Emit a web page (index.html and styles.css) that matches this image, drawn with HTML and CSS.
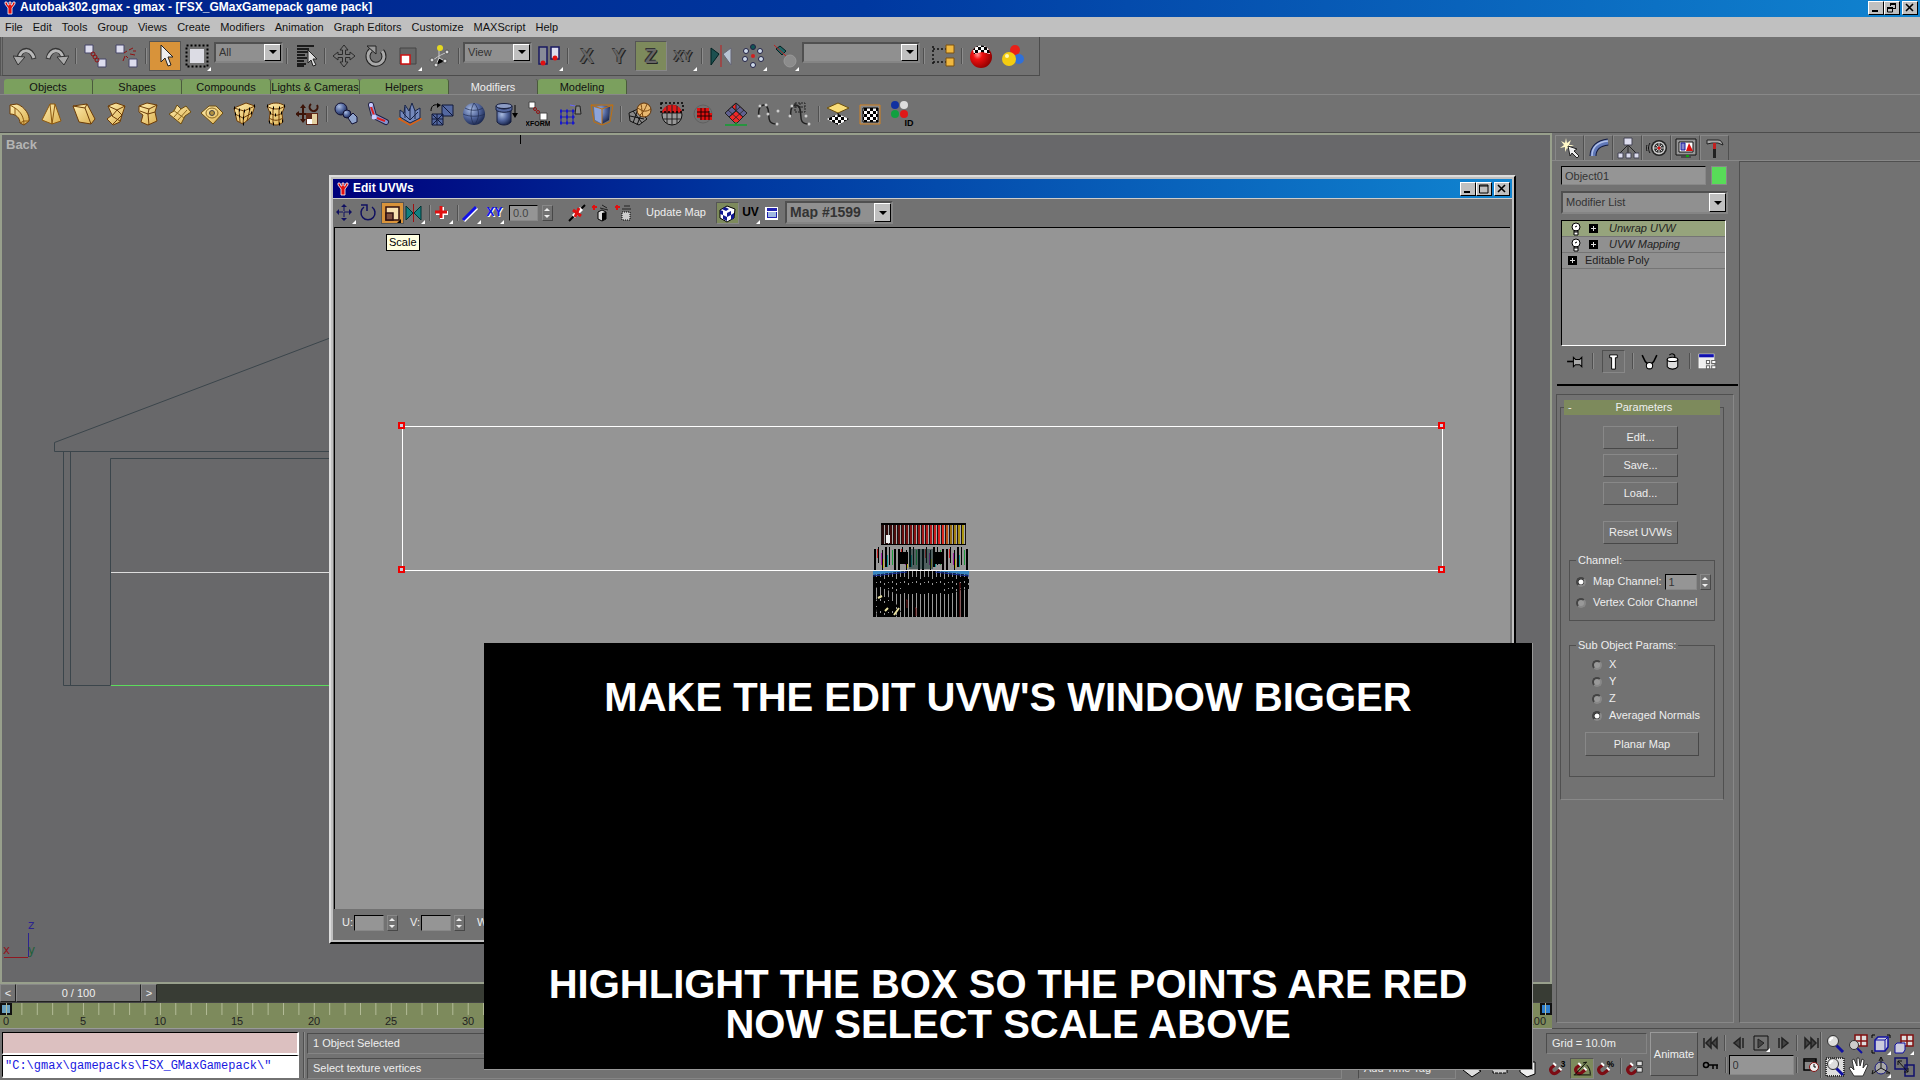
FILE: index.html
```html
<!DOCTYPE html>
<html lang="en">
<head>
    <meta charset="UTF-8">
    <meta name="viewport" content="width=device-width, initial-scale=1.0">
    <title>Autobak302.gmax - gmax</title>
    <link rel="stylesheet" href="styles.css">
</head>
<body>
    <!-- shared icons -->
    <svg class="defs" aria-hidden="true">
        <symbol id="logo" viewBox="0 0 12 14">
            <path d="M1 1h2l1 3h1V1h2v3h1l1-3h2v2L8 7v6H4V7L1 3z" fill="#e01010" stroke="#fff" stroke-width=".8"/>
        </symbol>
        <symbol id="magnet" viewBox="0 0 24 20">
            <path d="M10 6l-4 3a4 4 0 0 0 5 6l5-4" fill="none" stroke="#7c0c14" stroke-width="3.500"/>
            <path d="M8 4l3 3M14 9l3 3" stroke="#fff" stroke-width="2"/>
        </symbol>
        <symbol id="bulb" viewBox="0 0 10 14">
            <circle cx="5" cy="5" r="4" fill="#fff" stroke="#000"/>
            <path d="M3 9h4v4H3z" fill="#fff" stroke="#000"/><path d="M4 5l2-1M3 10h4" stroke="#000"/>
        </symbol>
        <symbol id="plus" viewBox="0 0 9 9">
            <path d="M0 0h9v9H0z"/><path d="M2 4.500h5M4.500 2v5" stroke="#ddd"/>
        </symbol>
        <symbol id="lens" viewBox="0 0 22 22">
            <path d="M12 12l7 7" stroke="#1010a0" stroke-width="3"/><circle cx="9" cy="8" r="5.500" fill="#ddd" stroke="#333"/><path d="M6 8a3 3 0 0 1 3-3" stroke="#fff" stroke-width="2" fill="none"/>
        </symbol>
        <pattern id="checks" width="6" height="6" patternUnits="userSpaceOnUse">
            <path d="M0 0h6v6H0z" fill="#fff"/><path d="M0 0h3v3H0zM3 3h3v3H3z"/>
        </pattern>
        <radialGradient id="steel" cx=".35" cy=".3" r=".8"><stop offset="0" stop-color="#a9bce0"/><stop offset=".5" stop-color="#51659c"/><stop offset="1" stop-color="#101c40"/></radialGradient>
        <radialGradient id="redball" cx=".35" cy=".4" r=".7"><stop offset="0" stop-color="#ff9090"/><stop offset=".3" stop-color="#f01010"/><stop offset="1" stop-color="#800"/></radialGradient>
        <linearGradient id="gold" x2="1" y2="1"><stop offset="0" stop-color="#ffeeb0"/><stop offset="1" stop-color="#dcb050"/></linearGradient>
    </svg>

    <header class="titlebar">
        <svg class="logo"><use href="#logo"/></svg>
        <span class="caption">Autobak302.gmax - gmax - [FSX_GMaxGamepack game pack]</span>
        <div class="winbtns">
            <button aria-label="Minimize"><svg viewBox="0 0 12 10"><path d="M2 7h6v2H2z"/></svg></button>
            <button aria-label="Restore"><svg viewBox="0 0 12 10" fill="none" stroke="#000"><path d="M4.500 1v2M4 1.500h6M9.500 1v5M7 5.500h3M1 4.500h6M1.500 4v5h5v-5M1 5.500h6M4 .5h6"/></svg></button>
            <button class="close" aria-label="Close"><svg viewBox="0 0 12 10"><path d="M2 1l7 7M9 1l-7 7" stroke="#000" stroke-width="1.600"/></svg></button>
        </div>
    </header>

    <nav class="menubar">
        <a href="#">File</a><a href="#">Edit</a><a href="#">Tools</a><a href="#">Group</a><a href="#">Views</a><a href="#">Create</a><a href="#">Modifiers</a><a href="#">Animation</a><a href="#">Graph Editors</a><a href="#">Customize</a><a href="#">MAXScript</a><a href="#">Help</a>
    </nav>

    <div class="toolbar">
        <button class="tool" aria-label="Undo"><svg viewBox="0 0 24 24"><path d="M6 14C8 4 18 3 21 15" fill="none" stroke="#333" stroke-width="5"/><path d="M6 14C8 5 17 4 21 14" fill="none" stroke="#b8b8b8" stroke-width="3"/><path d="M0 12l12 1-7 8z" fill="#aaa" stroke="#333"/></svg></button>
        <button class="tool" aria-label="Redo"><svg viewBox="0 0 24 24"><path d="M18 14C16 4 6 3 3 15" fill="none" stroke="#333" stroke-width="5"/><path d="M18 14C16 5 7 4 3 14" fill="none" stroke="#b8b8b8" stroke-width="3"/><path d="M24 12l-12 1 7 8z" fill="#aaa" stroke="#333"/></svg></button>
        <span class="sep"></span>
        <button class="tool" aria-label="Link"><svg viewBox="0 0 24 24"><path d="M2 1h8v8H2zM15 15h8v8h-8z" fill="#dde" stroke="#446"/><g fill="none" stroke="#901010"><circle cx="10" cy="10" r="2"/><circle cx="12" cy="13" r="2"/><circle cx="14" cy="16" r="2"/></g></svg></button>
        <button class="tool" aria-label="Unlink"><svg viewBox="0 0 24 24"><path d="M1 1h8v8H1zM14 15h8v8h-8z" fill="#dde" stroke="#446"/><path d="M9 9l3-2M13 14l-2-2M14 6l4-2M18 7h3M15 10l5 1M10 12l-2 5" stroke="#901010"/></svg></button>
        <span class="sep"></span>
        <button class="tool hot" aria-label="Select"><svg viewBox="0 0 24 24"><path d="M8 1v17l4-4 3 8 3-1-3-8h5z" fill="#eee" stroke="#222"/></svg></button>
        <button class="tool fly" aria-label="Region"><svg viewBox="0 0 24 24"><path d="M1.500 1.500h21v21h-21z" fill="none" stroke="#000" stroke-width="2" stroke-dasharray="2 2"/><path d="M5 5h14v14H5z" fill="#dcdce4"/></svg></button>
        <span class="combo w69"><select aria-label="Selection filter"><option>All</option></select></span>
        <span class="sep"></span>
        <button class="tool" aria-label="Select by name"><svg viewBox="0 0 24 24"><path d="M3 2h17M3 5h12M3 8h12M3 11h8M3 14h10M3 17h7M3 20h9M3 22h7" stroke="#000" stroke-width="1.500"/><path d="M14 6v13l3-3 2 6 3-1-3-6h4z" fill="#ddd" stroke="#222"/></svg></button>
        <span class="sep"></span>
        <button class="tool" aria-label="Move"><svg viewBox="0 0 24 24"><path d="M12 1l4 5h-2.500v4.500H18V8l5 4-5 4v-2.500h-4.500V18H16l-4 5-4-5h2.500v-4.500H6V16l-5-4 5-4v2.500h4.500V6H8z" fill="#777" stroke="#2a2a2a"/></svg></button>
        <button class="tool" aria-label="Rotate"><svg viewBox="0 0 24 24"><path d="M7 6a8 8 0 1 0 11 1" fill="none" stroke="#222" stroke-width="5"/><path d="M7 6a8 8 0 1 0 11 1" fill="none" stroke="#aaa" stroke-width="3"/><path d="M3 2h9v8z" fill="#999" stroke="#222"/></svg></button>
        <button class="tool fly" aria-label="Scale"><svg viewBox="0 0 24 24"><path d="M4 4h16v16H4z" fill="#666" stroke="#444"/><path d="M5 11h9v9H5z" fill="#fff" stroke="#d01010" stroke-width="1.500"/></svg></button>
        <button class="tool" aria-label="Manipulate"><svg viewBox="0 0 24 24"><path d="M11 5l0 10M5 16l6-4 8-4M8 21l3-7 6 3" stroke="#ccc"/><circle cx="12" cy="4" r="3" fill="#e4d820"/><g fill="#ddd" stroke="#555"><circle cx="19" cy="8" r="2"/><circle cx="4" cy="16" r="2"/><circle cx="8" cy="21" r="2"/><circle cx="17" cy="17" r="2"/></g></svg></button>
        <span class="sep"></span>
        <span class="combo w69"><select aria-label="Coordinate system"><option>View</option></select></span>
        <button class="tool fly" aria-label="Pivot"><svg viewBox="0 0 24 24"><path d="M2 3h8v17H2z" fill="#888c98" stroke="#1a1a60" stroke-width="1.500"/><path d="M14 3h8v12h-8z" fill="#dde" stroke="#1a1a60" stroke-width="1.500"/><circle cx="6" cy="19" r="2.500" fill="#e01010"/><circle cx="18" cy="14" r="2.500" fill="#e01010"/></svg></button>
        <span class="sep"></span>
        <button class="tool axis">X</button>
        <button class="tool axis">Y</button>
        <button class="tool axis on">Z</button>
        <button class="tool axis small fly">XY</button>
        <span class="sep"></span>
        <button class="tool" aria-label="Mirror"><svg viewBox="0 0 24 24"><path d="M2 4l8 6-8 11z" fill="#1c5050" stroke="#022"/><path d="M22 4l-8 6 8 11z" fill="#b8c4d4" stroke="#667"/><path d="M12 1v22" stroke="#c02020"/></svg></button>
        <button class="tool fly" aria-label="Array"><svg viewBox="0 0 24 24"><g fill="#ccd8e8" stroke="#224"><circle cx="12" cy="3" r="2.500" fill="#155"/><circle cx="19" cy="7" r="2.500"/><circle cx="20" cy="15" r="2.500"/><circle cx="12" cy="21" r="2.500"/><circle cx="4" cy="15" r="2.500"/><circle cx="5" cy="7" r="2.500"/></g><circle cx="12" cy="12" r="2" fill="#d02020"/></svg></button>
        <button class="tool fly" aria-label="Align"><svg viewBox="0 0 24 24"><path d="M3 5l4-3 6 5-4 4z" fill="#266" stroke="#022"/><path d="M1 1l12 11" stroke="#c02020"/><circle cx="17" cy="17" r="6" fill="#8c8c8c" stroke="#999"/></svg></button>
        <span class="combo w118"><select aria-label="Named selections"><option></option></select></span>
        <span class="sep"></span>
        <button class="tool" aria-label="Track view"><svg viewBox="0 0 24 24"><path d="M2 2v18M2 5h13M2 18h13" stroke="#111" stroke-width="1.500" stroke-dasharray="2 2"/><path d="M15 1h8v8h-8zM15 14h8v8h-8z" fill="#f0b840" stroke="#7a5010"/></svg></button>
        <span class="sep"></span>
        <button class="tool" aria-label="Material editor"><svg viewBox="0 0 24 24"><circle cx="12" cy="13" r="11" fill="url(#redball)"/><path d="M4 6c3-6 13-6 16 0l1 4-8-2-8 2z" fill="url(#checks)"/></svg></button>
        <button class="tool" aria-label="Material navigator"><svg viewBox="0 0 24 24"><circle cx="14" cy="6" r="5" fill="#e82018"/><circle cx="18" cy="15" r="5" fill="#3070d8"/><circle cx="8" cy="15" r="7" fill="#f4cc10"/><circle cx="6" cy="12" r="2" fill="#fff8b0"/></svg></button>
    </div>

    <div class="shelf">
        <div class="shelf-tabs">
            <button>Objects</button><button>Shapes</button><button>Compounds</button><button>Lights &amp; Cameras</button><button>Helpers</button><button class="current">Modifiers</button><button>Modeling</button>
        </div>
        <div class="shelf-icons">
            <button class="tool" aria-label="Bend"><svg viewBox="0 0 24 24"><path d="M2 3l7-1c8 3 13 11 12 17l-5 4-4-2C12 16 8 12 2 12z" fill="url(#gold)" stroke="#6c3c08"/><path d="M2 3l5 3c6 4 9 9 9 17M7 6v7M12 21l4-2 5 0" fill="none" stroke="#8c5810"/></svg></button>
            <button class="tool" aria-label="Taper"><svg viewBox="0 0 24 24"><path d="M10 2h5l6 17-9 3-10-4z" fill="url(#gold)" stroke="#8c5810"/><path d="M10 2l2 20 3-20" fill="none" stroke="#8c5810"/></svg></button>
            <button class="tool" aria-label="Skew"><svg viewBox="0 0 24 24"><path d="M1 4l14-2 8 15-4 5-12-2z" fill="url(#gold)" stroke="#6c3c08"/><path d="M1 4l12 2 6 16M13 6l2-4" fill="none" stroke="#6c3c08"/></svg></button>
            <button class="tool" aria-label="Twist"><svg viewBox="0 0 24 24"><path d="M4 4l8-3 9 3-3 9-2 7-7 3-6-6 5-4z" fill="url(#gold)" stroke="#6c3c08"/><path d="M4 4l9 4 8-4M13 8l-5 6 8 5M13 8l5 5-9 9" fill="none" stroke="#6c3c08"/></svg></button>
            <button class="tool" aria-label="Noise"><svg viewBox="0 0 24 24"><path d="M3 4l8-3 10 2-2 7 2 9-9 4-7-3 2-7-4-3z" fill="url(#gold)" stroke="#6c3c08"/><path d="M3 4l10 3 8-4M13 7l-1 5 1 11M4 9l8 3 7-2" fill="none" stroke="#6c3c08"/></svg></button>
            <button class="tool" aria-label="Wave"><svg viewBox="0 0 24 24"><path d="M9 3l4 4 5-3 5 6-6 4-4 8-6-5-6-5 5-3z" fill="url(#gold)" stroke="#6c4c10"/><path d="M5 8l11 8M13 7l-7 8M19 8l-9 10" stroke="#8c6820" fill="none"/></svg></button>
            <button class="tool" aria-label="Ripple"><svg viewBox="0 0 24 24"><path d="M1 11l8-7h7l7 7-10 11z" fill="url(#gold)" stroke="#6c4c10"/><ellipse cx="12" cy="11" rx="6" ry="5" fill="none" stroke="#8c6820"/><circle cx="12" cy="11" r="2.500" fill="#b09040" stroke="#444"/></svg></button>
            <button class="tool" aria-label="FFD box"><svg viewBox="0 0 24 24"><path d="M2 6l12-5 9 3-4 11-8 7-6-3z" fill="url(#gold)" stroke="#6c3c08"/><path d="M2 6l10 3 11-5M3 12l8 4 9-5M12 9l-1 13M7 8l1 12M18 7l-3 12" fill="none" stroke="#6c3c08"/><path d="M2 6h1M12 9h1M22 4h1M3 12h1M11 16h1M19 11h1M7 8h1M11 22h1M7 14h1M17 7h1" stroke="#000" stroke-width="3"/></svg></button>
            <button class="tool" aria-label="FFD cylinder"><svg viewBox="0 0 24 24"><path d="M3 4c5-4 13-4 18 0l-3 7 1 9c-4 4-10 4-14 0l1-9z" fill="url(#gold)" stroke="#6c3c08"/><path d="M3 4c5 4 13 4 18 0M6 11c4 3 8 3 12 0M5 16c5 3 9 3 14 0M9 6v16M15 6v16" fill="none" stroke="#6c3c08"/><path d="M3 4h1M9 6h1M15 6h1M20 4h1M6 11h1M11 13h1M17 11h1M5 20h1M9 22h1M15 22h1M18 19h1" stroke="#000" stroke-width="3"/></svg></button>
            <button class="tool" aria-label="XForm gizmo"><svg viewBox="0 0 24 24"><path d="M7 5v13M1 12h13" stroke="#3c1408" stroke-width="2"/><path d="M7 2l-3 4h6zM7 21l-3-4h6zM-1 12l4-3v6z" fill="#3c1408"/><path d="M15 2a4 4 0 1 0 6 1" fill="none" stroke="#3c1408" stroke-width="2"/><path d="M10 11h12v12H10z" fill="#5c2818"/><path d="M11 17h5v5h-5z" fill="#fff"/><path d="M16 12h5v10h-5z" fill="#e4d0a0"/></svg></button>
            <span class="sep"></span>
            <button class="tool" aria-label="Skin"><svg viewBox="0 0 24 24"><circle cx="7" cy="7" r="6" fill="url(#steel)" stroke="#113"/><circle cx="13" cy="12" r="4" fill="url(#steel)" stroke="#113"/><path d="M14 16l5-5 4 4v5l-5 2z" fill="#90a4cc" stroke="#113"/></svg></button>
            <button class="tool" aria-label="Flex"><svg viewBox="0 0 24 24"><path d="M5 3l3 11 12 6" stroke="#224" stroke-width="6" stroke-linecap="round" fill="none"/><path d="M5 3l3 11 12 6" stroke="#8894d0" stroke-width="4" stroke-linecap="round" fill="none"/><path d="M5 5l3 8M11 16l8 3" stroke="#e02020" stroke-width="2"/><circle cx="5" cy="3" r="2" fill="#ccf"/><circle cx="8" cy="15" r="2.500" fill="#ccf"/></svg></button>
            <button class="tool" aria-label="Displace"><svg viewBox="0 0 24 24"><path d="M1 17l11-5 11 5-11 6z" fill="none" stroke="#e06010" stroke-width="1.500"/><path d="M2 15V8l4 3 1-8 4 6 3-8 3 8 5-3v10l-10 5z" fill="#7488bc" stroke="#182448"/><path d="M7 5v11M12 6v12M17 9v8M5 11l7 7 8-8" stroke="#182448" fill="none"/></svg></button>
            <button class="tool" aria-label="Affect region"><svg viewBox="0 0 24 24"><path d="M12 3h11v11H12zM2 12h11v11H2z" fill="#5468a0" stroke="#101838"/><path d="M12 3l11 11M2 12l11 11M13 12L2 23M7 12v11M2 17h11" stroke="#101838"/><path d="M1 9c0-5 3-7 7-6" stroke="#000" fill="none"/><path d="M7 1l4 2-4 3z"/></svg></button>
            <button class="tool" aria-label="Spherify"><svg viewBox="0 0 24 24"><circle cx="12" cy="12" r="11" fill="url(#steel)"/><path d="M1 12c6 3 16 3 22 0M12 1c-4 7-4 15 0 22M12 1c6 6 6 16 0 22M3 6c5 3 13 3 18 0" fill="none" stroke="#202c50" stroke-width=".7"/></svg></button>
            <button class="tool" aria-label="Squeeze"><svg viewBox="0 0 24 24"><path d="M3 8h14v12c-3 4-11 4-14 0z" fill="url(#steel)" stroke="#182040"/><path d="M2 4c3 4 13 4 16 0v4c-4 3-12 3-16 0z" fill="#5468a0" stroke="#182040"/><ellipse cx="10" cy="4" rx="8" ry="2.500" fill="#8c9cc4" stroke="#182040"/><path d="M21 3v10" stroke="#000"/><path d="M18 11h6l-3 5z"/></svg></button>
            <button class="tool" aria-label="XForm"><svg class="tall" viewBox="0 0 24 26"><path d="M3 1h6v6H3zM14 12h7v7h-7z" fill="#fff" stroke="#444"/><g fill="none" stroke="#901010"><circle cx="9" cy="8" r="1.500"/><circle cx="12" cy="11" r="1.500"/></g><text x="12" y="25" class="icon-text">XFORM</text></svg></button>
            <button class="tool" aria-label="FFD select"><svg viewBox="0 0 24 24"><path d="M2 9h15M2 15h15M2 21h15M3 9v13M9 9v13M15 9v13" stroke="#2020a0"/><path d="M2 9h2M8 9h2M14 9h2M2 15h2M8 15h2M14 15h2M2 21h2M8 21h2M14 21h2" stroke="#1818d0" stroke-width="3"/><path d="M18 4h4l1 8h-6z" fill="#888" stroke="#222"/><path d="M12 3l5 1" stroke="#66f"/></svg></button>
            <button class="tool" aria-label="Lattice"><svg viewBox="0 0 24 24"><path d="M4 5l8-2 8 2-1 13-7 4-7-4z" fill="url(#steel)"/><path d="M4 5l8 3v14l-7-4z" fill="#8ca4dc"/><path d="M1 3h22l-3 17-8 3-8-3zM1 3l11 4 11-4M12 7v16" fill="none" stroke="#c07010"/></svg></button>
            <span class="sep"></span>
            <button class="tool" aria-label="Mesh select"><svg viewBox="0 0 24 24"><path d="M1 11l9-4 9 10-8 6-9-4z" fill="#888" stroke="#111"/><path d="M2 14l14 3M5 9l9 12M10 7l-5 14M14 10L9 23" stroke="#111"/><circle cx="16" cy="8" r="7" fill="#e8b870" stroke="#5c3008"/><path d="M10 6c5 4 8 4 13 1M13 2c1 5 1 9 2 13M19 2c-2 5-3 8-7 11" fill="none" stroke="#7c4810"/></svg></button>
            <button class="tool" aria-label="Volume select"><svg viewBox="0 0 24 24"><circle cx="12" cy="13" r="10" fill="#999" stroke="#111"/><path d="M2 11C3 0 21 0 22 11z" fill="#e01818"/><path d="M2 11h20M3 17h18M7 4v17M12 3v20M17 4v17" stroke="#222"/><path d="M1 1h22v9H1z" fill="none" stroke="#000" stroke-width="1.500" stroke-dasharray="2 2"/></svg></button>
            <button class="tool" aria-label="Poly select"><svg viewBox="0 0 24 24"><circle cx="11" cy="12" r="9" fill="none" stroke="#606060"/><path d="M5 6h12v5h3v7H8v-2H5z" fill="#e01010"/><path d="M5 10h12M5 14h15M9 6v12M13 6v12M17 9v9" stroke="#200"/></svg></button>
            <button class="tool" aria-label="Patch select"><svg viewBox="0 0 24 24"><path d="M12 1l11 10-11 11L1 11z" fill="#f02828" stroke="#222"/><path d="M12 1l11 10-4 4-11-10zM12 1L1 11l4 4 7-6z" fill="#606090" stroke="#222"/><path d="M8 5l11 10M4 8l11 10M16 5L5 15M20 8L9 18" stroke="#222" stroke-width=".8"/><path d="M1 23h22M12 20v3" stroke="#10a030" stroke-width="1.500"/></svg></button>
            <button class="tool" aria-label="Spline select"><svg viewBox="0 0 24 24"><path d="M3 15C1 2 10 0 12 7s-2 15 9 15" fill="none" stroke="#222" stroke-width="1.500"/><g fill="#ccc"><circle cx="3" cy="14" r="1.500"/><circle cx="4" cy="4" r="1.500"/><circle cx="10" cy="3" r="1.500"/><circle cx="12" cy="12" r="1.500"/><circle cx="21" cy="22" r="1.500"/><circle cx="22" cy="9" r="1.500"/></g></svg></button>
            <button class="tool" aria-label="Spline edit"><svg viewBox="0 0 24 24"><path d="M3 15C1 2 10 0 12 7s-2 15 9 15" fill="none" stroke="#222" stroke-width="1.500"/><path d="M7 1h10v9H7zM12 1v9M7 5h10" fill="none" stroke="#222" stroke-dasharray="2 1"/><g fill="#ccc"><circle cx="2" cy="14" r="1.500"/><circle cx="4" cy="4" r="1.500"/><circle cx="18" cy="14" r="1.500"/><circle cx="21" cy="22" r="1.500"/></g></svg></button>
            <span class="sep"></span>
            <button class="tool" aria-label="UVW map"><svg viewBox="0 0 24 24"><path d="M12 12l11 5-11 6-11-6z" fill="url(#checks)"/><path d="M12 1l11 5-11 5L1 6z" fill="#f8dc78" stroke="#6c5010"/><path d="M12 11v4" stroke="#000"/></svg></button>
            <button class="tool" aria-label="Unwrap UVW"><svg viewBox="0 0 24 24"><path d="M2 3h20v19H2z" fill="#888" stroke="#d08020"/><path d="M5 6h15v14H5z" fill="url(#checks)" stroke="#000"/></svg></button>
            <button class="tool" aria-label="Material ID"><svg class="tall" viewBox="0 0 24 26"><circle cx="5" cy="4" r="4" fill="#1030a0"/><circle cx="14" cy="4" r="4" fill="#ddd"/><circle cx="5" cy="13" r="4" fill="#10a040"/><circle cx="14" cy="13" r="4" fill="#e01818"/><text x="19" y="25" class="icon-text id">ID</text></svg></button>
        </div>
    </div>

    <main class="main">
        <div class="left">
            <section class="viewport">
                <span class="view-name">Back</span>
                <svg class="scene">
                    <g fill="none" stroke="#3b454b">
                        <path d="M328 203L52.500 307.500V316.500H328M61.500 317V550.500H108.500M68.500 317V550M108.500 550V323.500H328"/>
                    </g>
                    <path d="M109 437.500H328" stroke="#ddd"/><path d="M109 550.500H328" stroke="#5cdc5c"/>
                    <path d="M518.500 0v9" stroke="#000"/>
                </svg>
                <svg class="tripod" viewBox="0 0 40 45">
                    <path d="M26.500 14V38" stroke="#2c2490"/><path d="M2 38.500H26" stroke="#901820"/>
                    <text x="26" y="10" fill="#2c2490">z</text><text x="1" y="35" fill="#901820">x</text><text x="26" y="35" fill="#206038">y</text>
                </svg>
            </section>
            <div class="slider">
                <button class="step">&lt;</button><button class="thumb">0 / 100</button><button class="step">&gt;</button>
            </div>
            <div class="track">
                <i class="marker start"></i><i class="marker end"></i>
                <div class="ticks">
                    <span class="first">0</span><span>5</span><span class="two">10</span><span class="two">15</span><span class="two">20</span><span class="two">25</span><span class="two">30</span><span class="last">100</span>
                </div>
            </div>
        </div>

        <aside class="side">
            <div class="side-tabs">
                <button aria-label="Create"><svg viewBox="0 0 22 22"><path d="M7 1l1 5 4-3-2 5 5 0-5 2 2 4-4-3-2 4 0-5-5 1 4-3-3-4 4 2z" fill="#fff8c8"/><path d="M9 9l2 10 2-3 5 5 2-2-5-5 3-2z" fill="#eee" stroke="#222"/></svg></button>
                <button class="current" aria-label="Modify"><svg viewBox="0 0 22 22"><path d="M5 19C5 11 11 6 20 5" fill="none" stroke="#141c40" stroke-width="7"/><path d="M5 19C5 11 11 6 20 5" fill="none" stroke="#6078b8" stroke-width="5"/><path d="M4 19C4 10 10 5 20 4" fill="none" stroke="#b0c0e8" stroke-width="1.500"/></svg></button>
                <button aria-label="Hierarchy"><svg viewBox="0 0 22 22"><path d="M11 8L3 16M11 8v8M11 8l8 8" stroke="#222"/><path d="M7 1h8v7H7zM1 16h5v5H1zM9 16h5v5H9zM17 16h5v5h-5z" fill="#dde" stroke="#445"/></svg></button>
                <button aria-label="Motion"><svg viewBox="0 0 22 22"><circle cx="13" cy="11" r="8" fill="#222"/><circle cx="13" cy="11" r="6.500" fill="#ccc"/><circle cx="13" cy="11" r="5" fill="#333"/><path d="M13 6v10M8 11h10M10 8l6 6M16 8l-6 6" stroke="#ccc"/><circle cx="13" cy="11" r="1.500" fill="#e01010"/><path d="M4 6c-2 3-2 7 0 10M1 8c-1 2-1 4 0 6" fill="none" stroke="#111"/></svg></button>
                <button aria-label="Display"><svg viewBox="0 0 22 22"><path d="M1 2h20v16H1z" fill="#999" stroke="#111"/><path d="M4 5h14v10H4z" fill="#fff" stroke="#111"/><path d="M6 6h4v7H6z" fill="#88c" stroke="#1818a0"/><path d="M11 14l3-8 4 8z" fill="#e01010"/><path d="M6 20h10" stroke="#222"/><path d="M11 19h3" stroke="#10a010" stroke-width="2"/></svg></button>
                <button aria-label="Utilities"><svg viewBox="0 0 22 22"><path d="M3 3h11c3 0 4 2 5 5l-5-2H8L3 7z" fill="#aaa" stroke="#222"/><path d="M9 6h3v7H9z" fill="#c02020"/><path d="M9 12h3v9H9z" fill="#222"/></svg></button>
            </div>
            <div class="side-body">
                <div class="panel">
                    <div class="name-row">
                        <input class="well" aria-label="Object name" value="Object01">
                        <button class="swatch" aria-label="Object colour"></button>
                    </div>
                    <span class="combo big"><select aria-label="Modifier list"><option>Modifier List</option></select></span>
                    <ul class="stack">
                        <li class="current"><svg class="bulb"><use href="#bulb"/></svg><svg class="plus"><use href="#plus"/></svg><em>Unwrap UVW</em></li>
                        <li><svg class="bulb"><use href="#bulb"/></svg><svg class="plus"><use href="#plus"/></svg><em>UVW Mapping</em></li>
                        <li class="base"><svg class="plus"><use href="#plus"/></svg><span>Editable Poly</span></li>
                    </ul>
                    <div class="stack-tools">
                        <button aria-label="Pin stack"><svg viewBox="0 0 20 20"><path d="M2 10h6" stroke="#000" stroke-width="1.500"/><path d="M8 6l2 2h4l2-2v9l-2-2h-4l-2 2z" fill="#aaa" stroke="#000"/></svg></button>
                        <span class="sep"></span>
                        <button class="pressed" aria-label="Show end result"><svg viewBox="0 0 20 20"><path d="M6 3h8v3h-2v12H8V6H6z" fill="#fff" stroke="#000"/></svg></button>
                        <span class="sep"></span>
                        <button aria-label="Make unique"><svg viewBox="0 0 20 20"><path d="M3 4l3 6 4 4M17 4l-3 6-4 4" fill="none" stroke="#000" stroke-width="1.500"/><circle cx="10" cy="14" r="3" fill="#fff" stroke="#000"/></svg></button>
                        <button aria-label="Remove modifier"><svg viewBox="0 0 20 20"><path d="M5 8h10v7c-2 3-8 3-10 0z" fill="#ddd" stroke="#000"/><ellipse cx="10" cy="8" rx="5" ry="2" fill="#fff" stroke="#000"/><path d="M7 4c3-3 6 0 5 2" stroke="#000" fill="none"/></svg></button>
                        <span class="sep"></span>
                        <button aria-label="Configure"><svg viewBox="0 0 20 20"><path d="M2 3h14v13H2z" fill="#eee" stroke="#fff"/><path d="M2 3h14v3H2z" fill="#1010b0"/><path d="M9 9h3v3H9zM14 9h4v3h-4zM9 14h3v3H9zM14 14h4v3h-4z" fill="#fff" stroke="#666"/></svg></button>
                    </div>
                    <div class="rollouts">
                        <div class="rollout">
                            <button class="rollout-head"><span>-</span><b>Parameters</b></button>
                            <div class="rollout-btns">
                                <button class="btn">Edit...</button>
                                <button class="btn">Save...</button>
                                <button class="btn">Load...</button>
                                <button class="btn reset">Reset UVWs</button>
                            </div>
                            <fieldset class="channel">
                                <legend>Channel:</legend>
                                <div class="line">
                                    <label><input type="radio" name="channel" checked>Map Channel:</label>
                                    <input class="well num" aria-label="Map channel" value="1"><span class="spin"></span>
                                </div>
                                <div class="line"><label><input type="radio" name="channel">Vertex Color Channel</label></div>
                            </fieldset>
                            <fieldset class="subobj">
                                <legend>Sub Object Params:</legend>
                                <label><input type="radio" name="axis">X</label>
                                <label><input type="radio" name="axis">Y</label>
                                <label><input type="radio" name="axis">Z</label>
                                <label><input type="radio" name="axis" checked>Averaged Normals</label>
                                <button class="btn planar">Planar Map</button>
                            </fieldset>
                        </div>
                    </div>
                </div>
                <div class="empty-dock"></div>
            </div>
        </aside>
    </main>

    <footer class="status">
        <div class="listener">
            <input class="macro" aria-label="Macro recorder">
            <input class="script" aria-label="Script output" value='"C:\gmax\gamepacks\FSX_GMaxGamepack\"'>
        </div>
        <span class="sep"></span>
        <div class="prompts">
            <div class="prompt-row">
                <div class="field grow">1 Object Selected</div>
                <div class="field grid-size">Grid = 10.0m</div>
            </div>
            <div class="prompt-row">
                <div class="field grow">Select texture vertices</div>
                <button class="field tag">Add Time Tag</button>
                <div class="locks">
                    <svg viewBox="0 0 24 20"><path d="M3 12l9-4 9 5-9 6z" fill="#ddd" stroke="#000"/></svg>
                    <svg viewBox="0 0 24 20"><path d="M5 10h14v5H5z" fill="#ccc" stroke="#000" stroke-dasharray="3 1"/></svg>
                    <svg viewBox="0 0 24 20"><path d="M4 4h15v12l-8 3-7-5z" fill="#eee" stroke="#000"/></svg>
                </div>
                <div class="snaps">
                    <button aria-label="3D snap"><svg viewBox="0 0 24 20"><use href="#magnet"/><text x="16" y="8" class="icon-text snap">3</text></svg></button>
                    <button class="on" aria-label="Angle snap"><svg viewBox="0 0 24 20"><use href="#magnet"/><path d="M3 17h19M4 17L17 3" stroke="#000"/><path d="M17 3l-4 1M17 6c3 3 4 6 4 10" stroke="#000" fill="none"/></svg></button>
                    <button aria-label="Percent snap"><svg viewBox="0 0 24 20"><use href="#magnet"/><text x="14" y="8" class="icon-text snap">%</text></svg></button>
                    <span class="sep"></span>
                    <button aria-label="Spinner snap"><svg viewBox="0 0 24 20"><use href="#magnet"/><path d="M15 2h6v5h-6zM15 9h6v5h-6z" fill="#ddd" stroke="#222"/></svg></button>
                </div>
            </div>
        </div>
        <button class="animate">Animate</button>
        <div class="playback">
            <div class="play-row">
                <button aria-label="Go to start"><svg viewBox="0 0 18 16"><path d="M2 3v10M9 3L4 8l5 5zM15 3l-5 5 5 5z" fill="#444" stroke="#222" stroke-width="1.500"/></svg></button>
                <span class="sep"></span>
                <button aria-label="Previous frame"><svg viewBox="0 0 18 16"><path d="M10 3L4 8l6 5zM13 3v10" fill="#444" stroke="#222" stroke-width="1.500"/></svg></button>
                <button class="fly" aria-label="Play"><svg viewBox="0 0 18 16"><path d="M2 1h14v14H2z" fill="none" stroke="#111"/><path d="M6 4v9l6-5z" fill="#444" stroke="#222"/></svg></button>
                <button aria-label="Next frame"><svg viewBox="0 0 18 16"><path d="M8 3l6 5-6 5zM5 3v10" fill="#444" stroke="#222" stroke-width="1.500"/></svg></button>
                <span class="sep"></span>
                <button aria-label="Go to end"><svg viewBox="0 0 18 16"><path d="M16 3v10M3 3l5 5-5 5zM9 3l5 5-5 5z" fill="#444" stroke="#222" stroke-width="1.500"/></svg></button>
            </div>
            <div class="play-row">
                <button aria-label="Key mode"><svg viewBox="0 0 18 16"><circle cx="4" cy="8" r="2.500" fill="none" stroke="#000" stroke-width="1.500"/><path d="M6 8h10M11 8v4M15 8v4" stroke="#000" stroke-width="1.500"/></svg></button>
                <span class="sep"></span>
                <input class="well frame" aria-label="Current frame" value="0">
                <span class="sep"></span>
                <button aria-label="Time configuration"><svg viewBox="0 0 18 16"><path d="M2 2h12v11H2zM2 4h12" fill="#888" stroke="#000" stroke-width="1.500"/><circle cx="12" cy="10" r="4.500" fill="#eee" stroke="#801010"/><path d="M12 7v3h2" stroke="#000" fill="none"/></svg></button>
            </div>
        </div>
        <span class="sep"></span>
        <div class="nav-tools">
            <button aria-label="Zoom"><svg viewBox="0 0 22 22"><use href="#lens"/></svg></button>
            <button aria-label="Zoom all"><svg viewBox="0 0 22 22"><path d="M8 2h12v11H8zM14 2v11M8 8h12" fill="#ddd" stroke="#801010" stroke-width="1.500"/><path d="M10 15l5 5" stroke="#1010a0" stroke-width="2"/><circle cx="7" cy="12" r="4.500" fill="#ccc" stroke="#333"/></svg></button>
            <button class="fly" aria-label="Zoom extents"><svg viewBox="0 0 22 22"><path d="M5 7l3-3h10v10l-3 4H5z" fill="#ccd" stroke="#1010a0" stroke-width="1.500"/><path d="M5 7h10v11M15 7l3-3" fill="none" stroke="#1010a0"/><path d="M2 5V2h3M17 2h3v3M2 17v3h3" fill="none" stroke="#000"/></svg></button>
            <button class="fly" aria-label="Zoom extents all"><svg viewBox="0 0 22 22"><path d="M8 2h12v11H8zM14 2v11M8 8h12" fill="#ddd" stroke="#801010" stroke-width="1.500"/><path d="M2 12l2-2h8v7l-2 3H2z" fill="#ccd" stroke="#1010a0"/></svg></button>
            <button aria-label="Region zoom"><svg viewBox="0 0 22 22"><path d="M2 2h18v18H2z" fill="#ddd" stroke="#333" stroke-width="2" stroke-dasharray="1 1"/><use href="#lens"/></svg></button>
            <button aria-label="Pan"><svg viewBox="0 0 22 22"><path d="M7 20l-5-8 2-1 3 3L5 4l2-1 3 7V2h2l1 8 2-7 2 1-1 8 3-4 2 1-5 11z" fill="#fff" stroke="#333"/></svg></button>
            <button class="fly" aria-label="Arc rotate"><svg viewBox="0 0 22 22"><circle cx="11" cy="12" r="6" fill="#aaa" stroke="#1a1a80"/><path d="M11 1v11l-9 6M11 12l9 5M11 1l-2 4M11 1l2 4M2 18l1-4M20 17l-4 0" stroke="#111" fill="none"/></svg></button>
            <button aria-label="Min/max toggle"><svg viewBox="0 0 22 22"><path d="M2 2h12v11H2zM12 9h9v11h-9z" fill="none" stroke="#10106c" stroke-width="1.500"/><path d="M5 5l10 11M5 5v4M5 5h4M15 16v-4M15 16h-4" stroke="#111"/></svg></button>
        </div>
    </footer>

    <!-- floating UVW editor -->
    <section class="window">
        <header class="titlebar">
            <svg class="logo"><use href="#logo"/></svg>
            <span class="caption">Edit UVWs</span>
            <div class="winbtns">
                <button aria-label="Minimize"><svg viewBox="0 0 12 10"><path d="M2 7h6v2H2z"/></svg></button>
                <button aria-label="Maximize"><svg viewBox="0 0 12 10"><path d="M1.500 1h8.500v8h-8.500zM1 2h9" fill="none" stroke="#000"/></svg></button>
                <button class="close" aria-label="Close"><svg viewBox="0 0 12 10"><path d="M2 1l7 7M9 1l-7 7" stroke="#000" stroke-width="1.600"/></svg></button>
            </div>
        </header>
        <div class="uv-tools">
            <button class="fly" aria-label="Move"><svg viewBox="0 0 20 20"><path d="M9 3v13M3 9h13" stroke="#101060" stroke-dasharray="5 1"/><path d="M6 4l3-3 3 3zM6 15l3 3 3-3zM4 6L1 9l3 3zM14 6l3 3-3 3z" fill="#101060"/></svg></button>
            <button aria-label="Rotate"><svg viewBox="0 0 20 20"><path d="M6 4a7 7 0 1 0 8 0" fill="none" stroke="#101060" stroke-width="1.500"/><path d="M3 2h6v6" fill="none" stroke="#101060" stroke-width="1.500"/></svg></button>
            <button class="hot fly dark" aria-label="Scale"><svg viewBox="0 0 20 20"><path d="M4 4h13v13H4z" fill="#f8e0b0" stroke="#301010" stroke-width="1.500"/><path d="M4 10h7v7H4z" fill="#805040" stroke="#301010" stroke-width="1.500"/></svg></button>
            <button class="fly" aria-label="Mirror"><svg viewBox="0 0 20 20"><path d="M2 3l7 7-7 7zM17 3l-7 7 7 7z" fill="#108080" stroke="#033"/><path d="M9.500 1v18" stroke="#a01010"/></svg></button>
            <span class="sep"></span>
            <button class="fly" aria-label="Add vertices"><svg viewBox="0 0 20 20"><path d="M10 4v12M4 10h12" stroke="#fff" stroke-width="4"/><path d="M9 3v12M3 9h12" stroke="#e01010" stroke-width="3"/></svg></button>
            <span class="sep thin"></span>
            <button class="fly" aria-label="Edge mode"><svg viewBox="0 0 20 20"><path d="M4 18L17 5" stroke="#fff" stroke-width="3"/><path d="M3 17L16 4" stroke="#1010e8" stroke-width="3"/></svg></button>
            <button class="fly xy">XY</button>
            <input class="well angle" aria-label="Falloff" value="0.0"><span class="spin"></span>
            <button class="first-action" aria-label="Break"><svg viewBox="0 0 20 20"><path d="M2 18L18 2" stroke="#000" stroke-width="2"/><path d="M5 12l8-8 3 3-8 8z" fill="#fff"/><path d="M6 7l8 6M12 5l-4 9" stroke="#e01010" stroke-width="3"/></svg></button>
            <button aria-label="Weld target"><svg viewBox="0 0 20 20"><path d="M8 9l4-2 4 2v7l-4 2-4-2z" fill="#ddd" stroke="#000"/><path d="M12 10v8l4-2V9z"/><path d="M10 5l8 2M12 2l5 3" stroke="#222"/><path d="M4 2v5M2 4h5" stroke="#e01010" stroke-width="2"/></svg></button>
            <button aria-label="Weld selected"><svg viewBox="0 0 20 20"><path d="M9 9h8v8H9z" fill="#ccc" stroke="#000" stroke-dasharray="1 1"/><path d="M9 6h9M11 3h6" stroke="#222"/><path d="M4 2v5M2 4h5" stroke="#e01010" stroke-width="2"/></svg></button>
            <button class="update">Update Map</button>
            <button class="on" aria-label="Show map"><svg viewBox="0 0 20 20"><path d="M3 7l7-4 8 3-1 9-7 4-7-4z" fill="#fff" stroke="#000"/><path d="M3 7l3 1v4l-3-1zM10 10l4-2v4l-4 2zM6 12l4 2v4l-4-2zM14 12l3-2v5l-3 2zM8 4l4 2-3 2-4-2z" fill="#101890"/></svg></button>
            <button class="fly uv">UV</button>
            <button aria-label="Options"><svg viewBox="0 0 20 20"><path d="M3 4h13v13H3z" fill="#fff"/><path d="M5 5h10v3H5zM5 9h10v6H5z" fill="#2020b0"/><path d="M6 9h8v5H6z" fill="#a0b8e0"/></svg></button>
            <span class="combo map"><select aria-label="Texture map"><option>Map #1599</option></select></span>
        </div>
        <div class="uv-canvas">
            <span class="tooltip">Scale</span>
            <svg class="uv-map">
                <defs>
                    <pattern id="spines" width="4" height="46" patternUnits="userSpaceOnUse"><path d="M0 0h3v46H0z"/><path d="M3 6h1v40H3z" fill="#999"/></pattern>
                    <linearGradient id="books"><stop offset="0" stop-color="#200808"/><stop offset=".3" stop-color="#701010"/><stop offset=".5" stop-color="#a01818"/><stop offset=".72" stop-color="#e02020"/><stop offset=".82" stop-color="#987010"/><stop offset="1" stop-color="#b0a010"/></linearGradient>
                    <pattern id="red-spines" width="4" height="22" patternUnits="userSpaceOnUse"><path d="M0 0h1v22H0z" fill="#181010"/><path d="M3 0h1v22H3z" fill="#aaa"/></pattern>
                    <pattern id="magazines" width="24" height="23" patternUnits="userSpaceOnUse">
                        <path d="M0 0h24v23H0z" fill="#989898"/><path d="M1 2h2v21H1zM5 0h1v16H5zM9 3h1v20H9zM12 0h2v20h-2zM16 0h1v18h-1zM21 2h2v21h-2z"/><path d="M4 2h1v9H4z" fill="#c02020"/><path d="M8 6h1v12H8z" fill="#a020a0"/><path d="M14 8h1v12h-1z" fill="#109090"/><path d="M19 3h1v15h-1z" fill="#20a040"/><path d="M10 12h1v9h-1z" fill="#c0b020"/>
                    </pattern>
                    <pattern id="grain" width="12" height="6" patternUnits="userSpaceOnUse"><path d="M0 0h8v2H0zM3 2h9v2H3zM0 4h6v1H0zM9 4h3v2H9z"/></pattern>
                </defs>
                <g transform="translate(538 295)">
                    <path d="M8 2h85v20H8z" fill="url(#books)"/><path d="M8 2h85v20H8z" fill="url(#red-spines)"/><path d="M8 0h85v2H8zM8 21h85v1H8z"/><path d="M13 12h4v8h-4z" fill="#eee"/>
                    <g transform="translate(0 24)"><path d="M0 0h96v23H0z" fill="url(#magazines)"/></g>
                    <path d="M26 29h9v12h-9zM61 29h9v12h-9z"/><path d="M36 26h24v20H36z" fill="#082828" opacity=".5"/>
                    <g transform="translate(0 48)"><path d="M0 0h96v46H0z" fill="url(#spines)"/></g>
                    <path d="M0 54h96v12l-8 1-10 4H24l-12-5-12-2z" fill="url(#grain)"/><path d="M28 64h42v5H28z"/>
                    <path d="M0 48h34L0 52zM96 48H62l34 4z" fill="#3884c0"/><path d="M34 49L0 53M62 49l34 4" stroke="#1830a0"/>
                    <path d="M2 77l12-4 8 6 6 10-6 5H4z" fill="url(#grain)"/><path d="M4 80h16v8H4z"/><path d="M5 75l4-2M21 92l5-7M12 88l3-3" stroke="#e8e0a0" stroke-width="2"/><path d="M33 77h1v8M42 85h1v8M86 60h1v34" stroke="#701818" fill="none"/>
                </g>
                <path d="M67.500 198.500h1040v144H67.500z" fill="none" stroke="#fff"/>
                <g fill="#ccd" stroke="#f00000" stroke-width="2"><path d="M64 195h5v5h-5zM64 339h5v5h-5zM1104 195h5v5h-5zM1104 339h5v5h-5z"/></g>
            </svg>
        </div>
        <div class="uv-coords">
            <label>U:<input class="well"></label><span class="spin"></span>
            <label>V:<input class="well"></label><span class="spin"></span>
            <label>W:<input class="well"></label><span class="spin"></span>
        </div>
    </section>

    <!-- tutorial caption -->
    <div class="note">
        <p>MAKE THE EDIT UVW'S WINDOW BIGGER</p>
        <p>HIGHLIGHT THE BOX SO THE POINTS ARE RED<br>NOW SELECT SCALE ABOVE</p>
    </div>
</body>
</html>
```
FILE: styles.css
```css
* {
    box-sizing: border-box;
}
body {
    margin: 0;
    position: relative;
    display: flex;
    flex-direction: column;
    min-height: 100vh;
    overflow: hidden;
    background: #727272;
    color: #eee;
    font-family: "Liberation Sans", Arial, sans-serif;
    font-size: 11px;
    line-height: 13px;
}
button, input, select {
    font: inherit;
    color: inherit;
    margin: 0;
    padding: 0;
    border: 0;
    background: none;
}
svg {
    display: block;
}
.defs {
    position: absolute;
    width: 0;
    height: 0;
}

/* title bars */
.titlebar {
    display: flex;
    align-items: center;
    height: 17px;
    padding: 0 2px 2px 4px;
    background: linear-gradient(to right, #001f88, #0038a0 45%, #1084d0);
    color: #fff;
    font-size: 12px;
    font-weight: bold;
}
.logo {
    width: 12px;
    height: 14px;
}
.caption {
    flex: 1;
    padding-left: 4px;
}
.winbtns {
    display: flex;
}
.winbtns button {
    width: 16px;
    height: 14px;
    padding: 1px;
    background: #c0c0c0;
    border: 1px solid;
    border-color: #fff #000 #000 #fff;
}
.winbtns svg {
    width: 12px;
    height: 10px;
}
.winbtns .close {
    margin-left: 2px;
}

.menubar {
    display: flex;
    gap: 10px;
    height: 20px;
    padding: 4px 5px 0;
    background: #c0c0c0;
}
.menubar a {
    color: #111;
    text-decoration: none;
}

/* tool buttons */
.toolbar {
    display: flex;
    align-items: center;
    align-self: flex-start;
    height: 39px;
    padding: 0 10px 0 6px;
    border-right: 1px solid #4c4c4c;
    border-bottom: 1px solid #4c4c4c;
    border-left: 3px double #555;
}
.tool {
    display: flex;
    align-items: center;
    justify-content: center;
    width: 32px;
    height: 30px;
}
.tool svg {
    width: 24px;
    height: 24px;
}
.tool svg.tall {
    height: 26px;
}
.hot {
    background: #d8933a;
    border: 1px solid #555;
}
.on {
    background: #7d8a5c;
    border: 1px solid #555;
    border-color: #555 #888 #888 #555;
}
.fly {
    position: relative;
}
.fly::after {
    content: "";
    position: absolute;
    right: 2px;
    bottom: 0;
    border: 2px solid #fff;
    border-top-color: transparent;
    border-left-color: transparent;
}
.dark::after {
    border-right-color: #000;
    border-bottom-color: #000;
}
.sep {
    flex: none;
    width: 6px;
    height: 16px;
    background: linear-gradient(to right, transparent 2px, #505050 2px, #505050 3px, #8c8c8c 3px, #8c8c8c 4px, transparent 4px);
}
.axis {
    color: #666;
    font-size: 20px;
    line-height: 24px;
    font-weight: bold;
    text-shadow: 1px 1px #222, -1px -1px #333;
}
.axis.small {
    font-size: 14px;
}
.icon-text {
    font-size: 7px;
    font-weight: bold;
    text-anchor: middle;
}
.icon-text.id {
    font-size: 9px;
}
.icon-text.snap {
    font-size: 9px;
    text-anchor: start;
}

/* sunken fields and drop-downs */
.well {
    background: #959595;
    color: #333;
    border: 1px solid;
    border-color: #000 #888 #888 #000;
    padding: 0 3px;
}
.combo {
    position: relative;
    display: block;
    height: 21px;
    margin: 0 1px 8px;
}
.combo select {
    appearance: none;
    width: 100%;
    height: 100%;
    padding: 0 3px;
    background: #909090;
    color: #333;
    border: 2px solid;
    border-color: #505050 #858585 #858585 #505050;
}
.combo::before {
    content: "";
    position: absolute;
    top: 2px;
    right: 2px;
    bottom: 2px;
    width: 15px;
    background: #c0c0c0;
    border: 1px solid;
    border-color: #fff #000 #000 #fff;
}
.combo::after {
    content: "";
    position: absolute;
    top: calc(50% - 2px);
    right: 6px;
    border: 4px solid transparent;
    border-top-color: #000;
    border-bottom-width: 0;
}
.w69 {
    width: 69px;
}
.w118 {
    width: 118px;
}

/* tabbed shelf */
.shelf {
    padding-top: 3px;
    border-bottom: 1px solid #4c4c4c;
}
.shelf-tabs {
    display: flex;
    padding-left: 4px;
    border-bottom: 1px solid #888;
}
.shelf-tabs button {
    width: 89px;
    height: 15px;
    padding-top: 1px;
    background: #7ba05e;
    color: #111;
    border-right: 1px solid #4a5a3c;
    border-radius: 3px 3px 0 0;
}
.shelf-tabs .current {
    background: #727272;
    color: #eee;
}
.shelf-icons {
    display: flex;
    align-items: center;
    height: 37px;
    padding-left: 4px;
}

/* viewport */
.main {
    flex: 1;
    display: flex;
}
.left {
    flex: 1;
    display: flex;
    flex-direction: column;
    min-width: 0;
}
.viewport {
    flex: 1;
    position: relative;
    background: #68686a;
    border: 2px solid #98a08c;
}
.view-name {
    position: absolute;
    left: 4px;
    top: 3px;
    color: #b4b4b4;
    font-size: 13px;
    font-weight: bold;
}
.scene {
    position: absolute;
    width: 100%;
    height: 100%;
}
.tripod {
    position: absolute;
    left: 0;
    bottom: 18px;
    width: 40px;
    height: 45px;
    font-family: "DejaVu Sans", sans-serif;
    font-size: 12px;
}

/* time slider */
.slider {
    display: flex;
    height: 18px;
    background: #383c34;
}
.slider button {
    width: 16px;
    background: #727272;
    border: 1px solid;
    border-color: #888 #222 #222 #888;
}
.slider .thumb {
    width: 125px;
}
.track {
    position: relative;
    height: 27px;
    padding: 0 6px;
    background: #7d8a5c;
    border-top: 1px solid #444;
    border-bottom: 1px solid #999;
}
.ticks {
    position: relative;
    display: flex;
    height: 100%;
    background: linear-gradient(to right, #b4bc98 1px, transparent 1px) 0 0 / 1% 12px repeat-x;
}
.ticks span {
    flex: 0 0 5%;
    padding-top: 12px;
    color: #222;
    text-indent: -3px;
}
.ticks .two {
    text-indent: -6px;
}
.ticks .last {
    flex: 0 0 1px;
    margin-left: auto;
    text-indent: -9px;
}
.marker {
    position: absolute;
    top: 0;
    width: 12px;
    height: 12px;
    background: #68a0c0;
    border: 2px solid #111;
}
.start {
    left: 0;
}
.end {
    right: 0;
    background: #3080d0;
}

/* command panel */
.side {
    display: flex;
    flex-direction: column;
    width: 368px;
    padding-bottom: 5px;
    border-bottom: 1px solid #4c4c4c;
}
.side-tabs {
    display: flex;
    padding: 2px 0 0 3px;
    border-bottom: 1px solid #888;
}
.side-tabs button {
    width: 29px;
    height: 25px;
    padding: 1px 3px;
    border: 1px solid #888;
    border-right-color: #505050;
    border-bottom: 0;
}
.side-tabs svg {
    width: 22px;
    height: 22px;
}
.side-body {
    flex: 1;
    display: flex;
}
.panel {
    display: flex;
    flex-direction: column;
    width: 187px;
    padding: 5px 5px 0 4px;
}
.empty-dock {
    flex: 1;
    border: 1px solid #505050;
    border-right: 0;
    border-bottom-color: #888;
}
.name-row {
    display: flex;
    gap: 5px;
    padding-left: 5px;
}
.name-row .well {
    width: 145px;
    height: 19px;
}
.swatch {
    width: 16px;
    height: 19px;
    background: #58dc58;
    border: 1px solid #888;
}
.combo.big {
    width: 167px;
    height: 23px;
    margin: 6px 0 6px 5px;
}
.stack {
    width: 165px;
    height: 126px;
    margin: 0 0 3px 5px;
    padding: 0;
    list-style: none;
    background: #909090;
    color: #222;
    border: 1px solid;
    border-color: #000 #fff #fff #000;
}
.stack li {
    display: flex;
    align-items: center;
    gap: 8px;
    height: 16px;
    padding-left: 9px;
    border-bottom: 1px solid #757575;
}
.stack .base {
    padding-left: 6px;
}
.stack .current {
    background: #96a47c;
}
.bulb {
    width: 10px;
    height: 14px;
}
.plus {
    width: 9px;
    height: 9px;
}
.stack em {
    padding-left: 3px;
}
.stack-tools {
    display: flex;
    align-items: center;
    height: 34px;
    padding: 0 0 10px 8px;
}
.stack-tools button {
    width: 23px;
    height: 23px;
    padding: 1px;
}
.stack-tools .pressed {
    margin: 0 3px;
    border: 1px solid #505050;
    border-color: #505050 #888 #888 #505050;
}
.stack-tools .sep {
    margin: 0 3px;
}
.stack-tools .pressed + .sep {
    margin: 0 2px;
}
.rollouts {
    flex: 1;
    margin-top: 11px;
    padding: 5px 9px 0 3px;
    border: 1px solid #505050;
    border-right-color: #888;
    border-bottom-color: #888;
    position: relative;
}
.rollouts::before {
    content: "";
    position: absolute;
    left: 0;
    right: -5px;
    top: -11px;
    border-top: 2px solid #000;
}
.rollout {
    height: 393px;
    margin-top: 7px;
    padding: 0 8px;
    border: 1px solid;
    border-color: #505050 #505050 #888 #505050;
}
.rollout-head {
    display: flex;
    width: calc(100% + 10px);
    height: 15px;
    margin: -8px -5px 11px;
    padding: 1px 4px;
    background: #7d8a5c;
    color: #eee;
}
.rollout-head b {
    flex: 1;
    font-weight: normal;
}
.rollout-btns {
    display: flex;
    flex-direction: column;
    align-items: flex-start;
    gap: 5px;
    padding-left: 34px;
}
.btn {
    width: 75px;
    height: 23px;
    border: 1px solid;
    border-color: #888 #484848 #484848 #888;
}
.reset {
    margin-top: 11px;
}
fieldset {
    min-width: 0;
    margin: 10px 0 0;
    padding: 0 6px;
    border: 1px solid #505050;
}
legend {
    margin-left: 0;
    padding: 0 2px;
}
label {
    display: flex;
    align-items: center;
    white-space: nowrap;
}
input[type="radio"] {
    appearance: none;
    width: 10px;
    height: 10px;
    margin-right: 7px;
    border: 2px solid #505050;
    border-color: #444 #888 #888 #444;
    border-radius: 50%;
    background: #999;
}
input[type="radio"]:checked {
    background: radial-gradient(#fff 2px, #222 3px);
}
.line {
    display: flex;
    align-items: center;
    gap: 3px;
    height: 21px;
}
.channel {
    height: 67px;
}
.channel .line:nth-of-type(1) {
    margin-top: 4px;
}
.num {
    width: 32px;
    height: 16px;
}
.spin {
    position: relative;
    flex: none;
    width: 11px;
    height: 16px;
    border: 1px solid;
    border-color: #888 #484848 #484848 #888;
}
.spin::before, .spin::after {
    content: "";
    position: absolute;
    left: 1px;
    border: 3px solid transparent;
}
.spin::before {
    top: 2px;
    border-top-width: 0;
    border-bottom-color: #eee;
}
.spin::after {
    bottom: 2px;
    border-bottom-width: 0;
    border-top-color: #eee;
}
.subobj {
    height: 138px;
    margin-top: 18px;
    padding-top: 4px;
}
.subobj label {
    height: 17px;
    padding-left: 16px;
}
.planar {
    width: 114px;
    height: 24px;
    margin: 8px 0 0 9px;
}

/* status bar */
.status {
    display: flex;
    height: 51px;
    padding: 3px 4px 2px 2px;
}
.status > .sep {
    height: 100%;
}
.listener {
    display: flex;
    flex-direction: column;
    width: 297px;
    margin-right: 2px;
}
.listener input {
    height: 23px;
    padding: 0 2px;
    border: 1px solid;
    border-color: #000 #fff #fff #000;
    border-width: 1px 2px 2px 1px;
}
.macro {
    background: #dcc0c0;
}
.listener .script {
    background: #fff;
    color: #1818e0;
    font-family: "Liberation Mono", "Courier New", monospace;
    font-size: 12px;
}
.prompts {
    flex: 1;
    display: flex;
    flex-direction: column;
    gap: 4px;
    padding-top: 1px;
}
.prompt-row {
    display: flex;
    height: 21px;
}
.field {
    padding: 3px 5px;
    border: 1px solid;
    border-color: #4c4c4c #858585 #858585 #4c4c4c;
}
.grow {
    flex: 1;
    margin-right: 16px;
}
.grid-size {
    width: 101px;
}
.tag {
    width: 98px;
    text-align: left;
}
.locks {
    display: flex;
    gap: 4px;
    width: 90px;
    padding-left: 4px;
}
.locks svg {
    width: 24px;
    height: 20px;
}
.snaps {
    display: flex;
    width: 101px;
}
.snaps button {
    width: 24px;
    height: 21px;
}
.snaps .sep {
    width: 5px;
}
.snaps svg {
    width: 22px;
    height: 19px;
}
.animate {
    width: 48px;
    height: 44px;
    margin: 0 2px 0 3px;
    border: 1px solid;
    border-color: #999 #484848 #484848 #999;
}
.playback {
    width: 122px;
    margin-right: -4px;
}
.play-row {
    display: flex;
    align-items: center;
    height: 22px;
}
.play-row button {
    width: 23px;
    height: 18px;
    padding: 0 2px;
}
.play-row svg {
    width: 18px;
    height: 16px;
}
.play-row .frame {
    width: 65px;
    height: 20px;
}
.nav-tools {
    display: grid;
    grid-template-columns: repeat(4, 23px);
    grid-auto-rows: 23px;
}
.nav-tools button {
    padding: 0;
}
.nav-tools svg {
    width: 22px;
    height: 22px;
}

/* UVW editor window */
.window {
    position: absolute;
    left: 329px;
    top: 175px;
    right: 404px;
    height: 769px;
    display: flex;
    flex-direction: column;
    padding: 2px;
    background: #727272;
    border: 2px solid;
    border-color: #ddd #000 #000 #ddd;
    box-shadow: inset -2px -2px #c0c0c0, inset 2px 2px #c0c0c0;
}
.window .titlebar {
    flex: none;
    height: 19px;
    padding: 1px 2px 1px 4px;
    background: linear-gradient(to right, #00007b, #0038a0 35%, #1084d0);
}
.uv-tools {
    flex: none;
    display: flex;
    align-items: center;
    height: 29px;
    padding: 0 0 1px 2px;
    border-top: 1px solid #ccc;
}
.uv-tools button {
    width: 23px;
    height: 22px;
}
.uv-tools svg {
    width: 20px;
    height: 20px;
}
.uv-tools .sep {
    width: 5px;
}
.uv-tools .xy, .uv-tools .uv {
    color: #1010e8;
    font-size: 12px;
    font-weight: bold;
    text-shadow: 1px 1px #fff;
}
.uv-tools .uv {
    color: #000;
    text-shadow: none;
}
.uv-tools .angle {
    width: 29px;
    height: 16px;
    margin: 0 4px 0 3px;
    color: #444;
}
.uv-tools .first-action {
    margin-left: 14px;
}
.uv-tools .update {
    width: 80px;
}
.combo.map {
    width: 108px;
    height: 23px;
    margin: 0;
}
.combo.map select {
    font-size: 14px;
    font-weight: bold;
}
.uv-canvas {
    flex: 1;
    position: relative;
    margin-left: 1px;
    margin-right: 2px;
    background: #959595;
    border-top: 1px solid #000;
    border-left: 1px solid #000;
}
.uv-map {
    position: absolute;
    width: 100%;
    height: 100%;
}
.tooltip {
    position: absolute;
    left: 51px;
    top: 6px;
    padding: 1px 2px;
    background: #ffffe1;
    color: #000;
    border: 1px solid #000;
}
.uv-coords {
    flex: none;
    display: flex;
    align-items: center;
    height: 31px;
    padding: 0 0 4px 9px;
}
.uv-coords .well {
    width: 30px;
    height: 16px;
    margin: 0 3px 0 1px;
}
.uv-coords .spin {
    margin-right: 12px;
}

.note {
    position: absolute;
    left: 484px;
    right: 387px;
    top: 643px;
    height: 427px;
    display: flex;
    flex-direction: column;
    justify-content: space-between;
    padding: 34px 0 25px;
    background: #000;
    color: #fff;
    border-right: 1px solid #999;
    border-bottom: 1px solid #999;
    font-size: 40px;
    line-height: 40px;
    font-weight: bold;
    text-align: center;
}
.note p {
    margin: 0;
}
```
